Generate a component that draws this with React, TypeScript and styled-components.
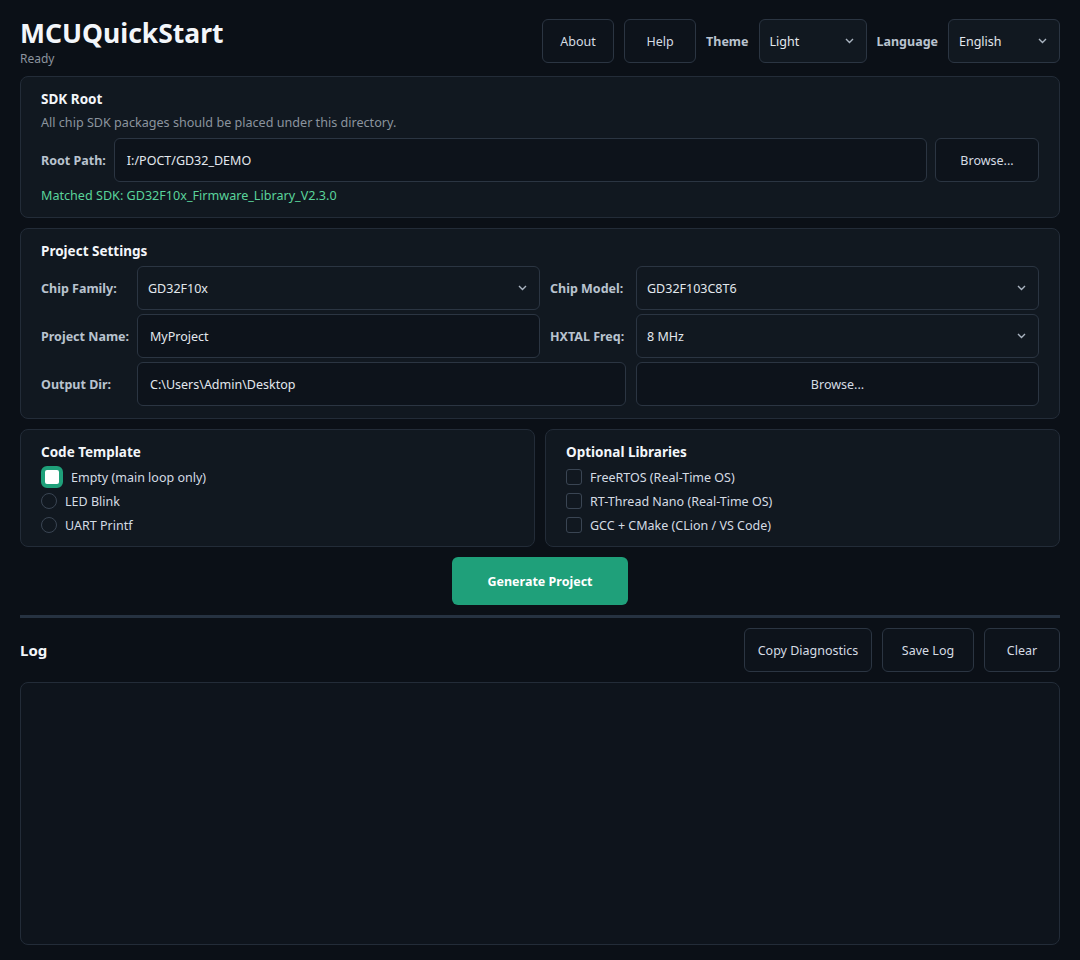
import { createGlobalStyle, styled } from 'styled-components';

const GlobalStyle = createGlobalStyle`
  html, body {
    margin: 0;
    padding: 0;
    background: #0b1017;
  }
  body {
    font-family: "Noto Sans", "Open Sans", sans-serif;
    font-size: 12px;
    color: #d5dce4;
  }
  * { box-sizing: border-box; }
`;

const Page = styled.div`
  padding: 18px 20px 16px;
  display: flex;
  flex-direction: column;
  gap: 10px;
`;

const Header = styled.header`
  display: flex;
  justify-content: space-between;
  align-items: flex-start;
  margin-bottom: -1px;
`;

const Brand = styled.div`
  display: flex;
  flex-direction: column;
`;

const Title = styled.h1`
  margin: 0;
  font-size: 26.5px;
  line-height: 30px;
  font-weight: 700;
  color: #f3f6fa;
`;

const Status = styled.div`
  font-size: 12px;
  color: #8b949e;
  margin-top: 2px;
`;

const Toolbar = styled.div`
  display: flex;
  align-items: center;
  gap: 10px;
  padding-top: 1px;
`;

const Button = styled.button<{ $w?: number }>`
  height: 44px;
  width: ${p => (p.$w ? `${p.$w}px` : 'auto')};
  padding: 0 12px;
  background: #0d131b;
  color: #d5dce4;
  border: 1px solid #2b3542;
  border-radius: 6px;
  font-family: inherit;
  font-size: 12.5px;
`;

const ToolLabel = styled.span`
  font-weight: 700;
  color: #b9c3cf;
  font-size: 12.5px;
`;

const SelectBox = styled.div<{ $w?: number }>`
  height: 44px;
  width: ${p => (p.$w ? `${p.$w}px` : 'auto')};
  background: #111820;
  border: 1px solid #2b3542;
  border-radius: 6px;
  display: flex;
  align-items: center;
  justify-content: space-between;
  padding: 0 12px 0 10px;
  color: #e3e8ee;
  font-size: 12.5px;
`;

const Chevron = () => (
  <svg width="9" height="6" viewBox="0 0 9 6" fill="none">
    <path d="M1 1l3.5 3.5L8 1" stroke="#aab4c0" strokeWidth="1.4" />
  </svg>
);

const Select = ({ value, w }: { value: string; w?: number }) => (
  <SelectBox $w={w}>
    <span>{value}</span>
    <Chevron />
  </SelectBox>
);

const Panel = styled.section<{ $pb?: number }>`
  background: #111820;
  border: 1px solid #232c38;
  border-radius: 8px;
  padding: 13px 20px ${p => p.$pb ?? 12}px;
  display: flex;
  flex-direction: column;
`;

const PanelTitle = styled.h2`
  margin: 0;
  font-size: 13.5px;
  line-height: 19px;
  font-weight: 700;
  color: #f3f6fa;
`;

const Hint = styled.div<{ $green?: boolean; $top?: number }>`
  font-size: 12.6px;
  line-height: 18px;
  margin-top: ${p => p.$top ?? 0}px;
  color: ${p => (p.$green ? '#5ad49b' : '#8b949e')};
`;

const PathRow = styled.div`
  display: flex;
  align-items: center;
  gap: 8px;
  margin: 6px 0 5px;
`;

const FieldLabel = styled.label`
  font-weight: 700;
  color: #b9c3cf;
  font-size: 12.5px;
  white-space: nowrap;
`;

const Input = styled.div<{ $span?: boolean }>`
  height: 44px;
  flex: 1;
  ${p => (p.$span ? 'grid-column: span 2;' : '')}
  background: #0d131b;
  border: 1px solid #2b3542;
  border-radius: 6px;
  display: flex;
  align-items: center;
  padding: 0 12px;
  color: #e3e8ee;
  font-size: 12.5px;
`;

const FormGrid = styled.div`
  display: grid;
  grid-template-columns: 86px 1fr 76px 1fr;
  column-gap: 10px;
  row-gap: 4px;
  align-items: center;
  margin-top: 5px;
  & > ${Button} { width: 100%; }
`;

const Columns = styled.div`
  display: grid;
  grid-template-columns: 1fr 1fr;
  gap: 10px;
`;

const OptionList = styled.div`
  display: flex;
  flex-direction: column;
  margin-top: 3px;
`;

const Option = styled.div`
  display: flex;
  align-items: center;
  gap: 8px;
  height: 24px;
  color: #d5dce4;
  font-size: 12.5px;
`;

const Radio = styled.span<{ $checked?: boolean }>`
  flex: none;
  ${p =>
    p.$checked
      ? `width: 22px; height: 22px; border-radius: 6px; background: #fff; border: 4px solid #1fa07a;`
      : `width: 16px; height: 16px; border-radius: 50%; border: 1px solid #3a4553;`}
`;

const Check = styled.span`
  flex: none;
  width: 16px;
  height: 16px;
  border-radius: 3px;
  border: 1px solid #3a4553;
`;

const Center = styled.div`
  display: flex;
  justify-content: center;
`;

const Primary = styled.button`
  width: 176px;
  height: 48px;
  background: #1fa07a;
  color: #fff;
  border: none;
  border-radius: 6px;
  font-family: inherit;
  font-weight: 700;
  font-size: 12.5px;
`;

const Divider = styled.hr`
  margin: 0;
  border: none;
  height: 3px;
  background: #263241;
`;

const LogHeader = styled.div`
  display: flex;
  justify-content: space-between;
  align-items: center;
`;

const LogTitle = styled.h3`
  margin: 0;
  font-size: 15px;
  font-weight: 700;
  color: #f3f6fa;
`;

const LogActions = styled.div`
  display: flex;
  gap: 10px;
`;

const LogBox = styled.div`
  height: 263px;
  background: #0e141c;
  border: 1px solid #232c38;
  border-radius: 8px;
`;

export default function App() {
  return (
    <>
      <GlobalStyle />
      <Page>
        <Header>
          <Brand>
            <Title>MCUQuickStart</Title>
            <Status>Ready</Status>
          </Brand>
          <Toolbar>
            <Button $w={72}>About</Button>
            <Button $w={72}>Help</Button>
            <ToolLabel>Theme</ToolLabel>
            <Select value="Light" w={108} />
            <ToolLabel>Language</ToolLabel>
            <Select value="English" w={112} />
          </Toolbar>
        </Header>

        <Panel $pb={12}>
          <PanelTitle>SDK Root</PanelTitle>
          <Hint $top={5}>All chip SDK packages should be placed under this directory.</Hint>
          <PathRow>
            <FieldLabel>Root Path:</FieldLabel>
            <Input>I:/POCT/GD32_DEMO</Input>
            <Button $w={104}>Browse...</Button>
          </PathRow>
          <Hint $green>Matched SDK: GD32F10x_Firmware_Library_V2.3.0</Hint>
        </Panel>

        <Panel $pb={12}>
          <PanelTitle>Project Settings</PanelTitle>
          <FormGrid>
            <FieldLabel>Chip Family:</FieldLabel>
            <Select value="GD32F10x" />
            <FieldLabel>Chip Model:</FieldLabel>
            <Select value="GD32F103C8T6" />
            <FieldLabel>Project Name:</FieldLabel>
            <Input>MyProject</Input>
            <FieldLabel>HXTAL Freq:</FieldLabel>
            <Select value="8 MHz" />
            <FieldLabel>Output Dir:</FieldLabel>
            <Input $span>C:\Users\Admin\Desktop</Input>
            <Button>Browse...</Button>
          </FormGrid>
        </Panel>

        <Columns>
          <Panel $pb={9}>
            <PanelTitle>Code Template</PanelTitle>
            <OptionList>
              <Option>
                <Radio $checked />
                Empty (main loop only)
              </Option>
              <Option>
                <Radio />
                LED Blink
              </Option>
              <Option>
                <Radio />
                UART Printf
              </Option>
            </OptionList>
          </Panel>
          <Panel $pb={9}>
            <PanelTitle>Optional Libraries</PanelTitle>
            <OptionList>
              <Option>
                <Check />
                FreeRTOS (Real-Time OS)
              </Option>
              <Option>
                <Check />
                RT-Thread Nano (Real-Time OS)
              </Option>
              <Option>
                <Check />
                GCC + CMake (CLion / VS Code)
              </Option>
            </OptionList>
          </Panel>
        </Columns>

        <Center>
          <Primary>Generate Project</Primary>
        </Center>

        <Divider />

        <LogHeader>
          <LogTitle>Log</LogTitle>
          <LogActions>
            <Button $w={128}>Copy Diagnostics</Button>
            <Button $w={92}>Save Log</Button>
            <Button $w={76}>Clear</Button>
          </LogActions>
        </LogHeader>

        <LogBox />
      </Page>
    </>
  );
}
